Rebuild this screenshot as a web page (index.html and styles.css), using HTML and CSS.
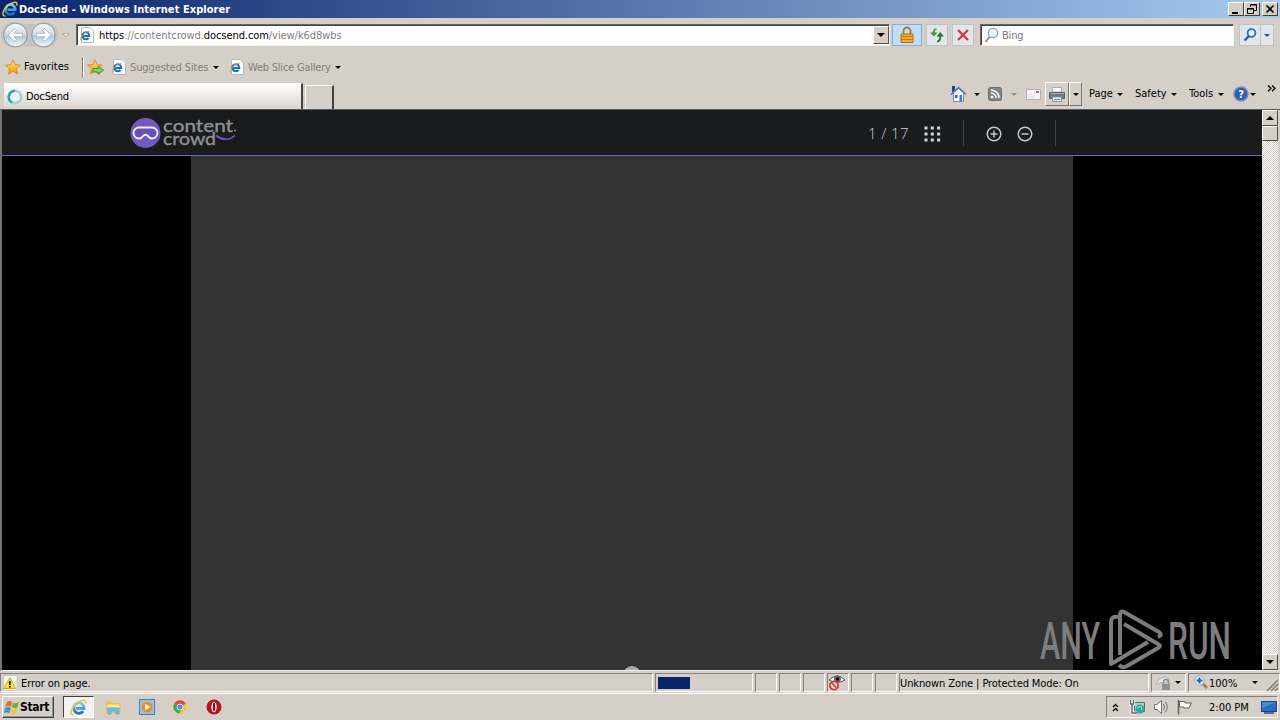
FILE: index.html
```html
<!DOCTYPE html>
<html lang="en">
<head>
  <meta charset="UTF-8">
  <title>DocSend - Windows Internet Explorer</title>
  <link rel="stylesheet" href="styles.css">
</head>
<body>
  <svg class="defs" width="0" height="0">
    <defs>
      <linearGradient id="glass" x1="0" y1="0" x2="0" y2="1">
        <stop offset="0" stop-color="#f8fafb"/><stop offset=".45" stop-color="#d3dce4"/><stop offset=".55" stop-color="#b4c8d8"/><stop offset="1" stop-color="#f0fbff"/>
      </linearGradient>
      <linearGradient id="blue" x1="0" y1="0" x2="0" y2="1">
        <stop offset="0" stop-color="#6fd0f6"/><stop offset="1" stop-color="#1c70c4"/>
      </linearGradient>
      <linearGradient id="gold" x1="0" y1="0" x2="0" y2="1">
        <stop offset="0" stop-color="#ffe36b"/><stop offset="1" stop-color="#f39a17"/>
      </linearGradient>
    </defs>
    <symbol id="ie" viewBox="0 0 16 16">
      <path d="M12.400 11.400A4.900 4.900 0 1 1 13.300 8.800H5.500" fill="none" stroke="url(#blue)" stroke-width="2.600"/>
      <path d="M3.500 15C-1 15.500 .5 9 6 4.500 10.500 .8 16.500 -.5 14.600 4.500" fill="none" stroke="#ecc04a" stroke-width="1.400"/>
    </symbol>
    <symbol id="ie-page" viewBox="0 0 16 16">
      <path d="M2.500 .5H11L14.500 4V15.500H2.500Z" fill="#fff" stroke="#b3bcc4"/>
      <path d="M9.500 11A3.500 3.500 0 1 1 10.300 9H4.500" fill="none" stroke="#1973bd" stroke-width="2"/>
      <path d="M2 13.500C-.5 12 5 4.500 11 4.200" fill="none" stroke="#d6aa31"/>
    </symbol>
    <symbol id="star" viewBox="0 0 16 16">
      <path d="M8 .8 10.200 5.600 15.400 6.200 11.500 9.700 12.600 15 8 12.300 3.400 15 4.500 9.700 .6 6.200 5.800 5.600Z" fill="url(#gold)" stroke="#cf8a1c" stroke-width=".9"/>
    </symbol>
  </svg>

  <div class="title-bar">
    <svg class="title-icon" width="16" height="16"><use href="#ie"/></svg>
    <span class="title-text">DocSend - Windows Internet Explorer</span>
    <div class="window-buttons">
      <svg class="win-btn" width="16" height="14"><path d="M3 10H9" stroke="#000" stroke-width="2"/></svg>
      <svg class="win-btn" width="16" height="14"><path d="M5.500 4V1.500H11.500V7.500H9M5 2H12M2.500 5.500H8.500V10.500H2.500ZM2 6H9" fill="none" stroke="#000"/></svg>
      <svg class="win-btn close" width="16" height="14"><path d="M3.500 2.500 10.500 9.500M10.500 2.500 3.500 9.500" stroke="#000" stroke-width="1.700"/></svg>
    </div>
  </div>

  <div class="nav-bar">
    <svg class="nav-arrows" width="76" height="34">
      <path d="M14 4Q29 8 45 4A13 13 0 0 1 45 30Q29 26 14 30A13 13 0 0 1 14 4" fill="#c3c2c2"/>
      <circle cx="15.500" cy="17" r="11.800" fill="url(#glass)" stroke="#8b959e"/>
      <circle cx="43.500" cy="17" r="11.800" fill="url(#glass)" stroke="#8b959e"/>
      <path d="M8 17 14.500 10.500 16.500 12.500 14 15.300H22.500V18.700H14L16.500 21.500 14.500 23.500Z" fill="#fff" stroke="#8fa5b7" stroke-width=".7"/>
      <path d="M51 17 44.500 10.500 42.500 12.500 45 15.300H36.500V18.700H45L42.500 21.500 44.500 23.500Z" fill="#fff" stroke="#8fa5b7" stroke-width=".7"/>
      <path d="M62.500 15.500H69.500L66 19Z" fill="#e5e2dc" stroke="#b5b0a9"/>
    </svg>
    <div class="field address">
      <svg width="16" height="16"><use href="#ie-page"/></svg>
      <span class="url"><b>https</b>://contentcrowd.<b>docsend.com</b>/view/k6d8wbs</span>
      <div class="combo"><i class="caret big"></i></div>
    </div>
    <div class="tool-btn lock">
      <svg width="16" height="18"><path d="M4.500 8V5A3.500 3.500 0 0 1 11.500 5V8" fill="none" stroke="#a57b28" stroke-width="1.800"/><path d="M2 8H14V16.500H2Z" fill="#f0ae27" stroke="#aa7414"/><path d="M2.500 10.500H13.500M2.500 13.500H13.500" stroke="#b87d16"/></svg>
    </div>
    <div class="tool-btn refresh">
      <svg width="16" height="16"><path d="M7.500 2.500C5 2 4.800 3 4.800 6" fill="none" stroke="#4aa351" stroke-width="2"/><path d="M1 5.500H8.500L4.800 9.500Z" fill="#3d9745"/><path d="M8 14.500C11 14.500 11.300 12 11.300 9" fill="none" stroke="#247c2e" stroke-width="2"/><path d="M7.500 9.500H15L11.300 5Z" fill="#247c2e"/></svg>
    </div>
    <div class="tool-btn stop">
      <svg width="14" height="14"><path d="M2 2 12 12M12 2 2 12" stroke="#cf3541" stroke-width="2.200"/></svg>
    </div>
    <div class="field search">
      <svg width="17" height="17"><circle cx="9" cy="6" r="4.700" fill="#eef5fa" stroke="#8ca0b0" stroke-width="1.300"/><path d="M5.500 10 1.500 15" stroke="#8a8a8a" stroke-width="2"/></svg>
      <span class="search-text">Bing</span>
    </div>
    <div class="tool-btn search-go">
      <svg width="14" height="14"><circle cx="8.500" cy="5" r="3.900" fill="#eaf5ff" stroke="#2f6bd0" stroke-width="1.800"/><path d="M6 8 1.500 12.500" stroke="#2855ae" stroke-width="2.300"/></svg>
    </div>
    <div class="tool-btn search-drop"><i class="caret blue"></i></div>
  </div>

  <div class="favorites-bar">
    <svg class="fav-star" width="16" height="16"><use href="#star"/></svg>
    <span class="fav-text">Favorites</span>
    <i class="divider"></i>
    <svg class="add-star" width="18" height="16" viewBox="0 0 18 16"><use href="#star" width="16" height="16"/><path d="M6 9.500H11V7L16.500 11.200 11 15.200V13H6Z" fill="#7ed35e" stroke="#2b8625" stroke-width=".8"/></svg>
    <svg class="page-icon" width="16" height="16"><use href="#ie-page"/></svg>
    <span class="suggested">Suggested Sites</span><i class="caret"></i>
    <svg class="slice-icon" width="16" height="16"><use href="#ie-page"/></svg>
    <span class="slice">Web Slice Gallery</span><i class="caret"></i>
  </div>

  <div class="tab-row">
    <div class="tab">
      <svg width="16" height="16"><circle cx="8" cy="8" r="6.300" fill="#e6f1f0" stroke="#a3d2d0" stroke-width="2.400"/><path d="M8 1.700A6.300 6.300 0 0 0 5 13.500" fill="none" stroke="#35a39b" stroke-width="2.400"/></svg>
      <span>DocSend</span>
    </div>
    <div class="new-tab"></div>
    <div class="commands">
      <svg class="home" width="18" height="18"><path d="M4.500 8V16.500H14.500V8L9.500 3.500Z" fill="#f7f9fd" stroke="#7189b3"/><path d="M2 9.500 9.500 2.500 17 9.500" fill="none" stroke="#5874ae" stroke-width="1.600"/><path d="M3 1H6V4.500L3 7.500Z" fill="#26418e"/><path d="M6 10H8.500V13H6Z" fill="#375f9b"/><path d="M10.500 10H13V16H10.500Z" fill="#3f7bc2"/></svg>
      <i class="caret home-caret"></i>
      <svg class="rss" width="14" height="14"><rect x=".5" y=".5" width="13" height="13" rx="2" fill="#858585" stroke="#6d6d6d"/><circle cx="4" cy="10" r="1.300" fill="#fff"/><path d="M3 6A5 5 0 0 1 8 11M3 3A8 8 0 0 1 11 11" fill="none" stroke="#fff" stroke-width="1.400"/></svg>
      <i class="caret dim rss-caret"></i>
      <svg class="mail" width="15" height="11"><rect x=".5" y=".5" width="14" height="10" fill="#f6f5f5" stroke="#b4afb4"/><path d="M10 2H13V4H10Z" fill="#d65261"/><path d="M2 8H8M2 6H6" stroke="#ddd"/></svg>
      <div class="print">
        <svg width="18" height="18"><path d="M4.500 2.500H13.500V7H4.500Z" fill="#fff" stroke="#aaa"/><path d="M1.500 7.500H16.500V13.500H1.500Z" fill="#77797c" stroke="#5d6063"/><path d="M2 8.500H16" stroke="#a9adb0"/><path d="M4.500 12H13.500V16.500H4.500Z" fill="#f4f9fb" stroke="#8b9294"/><path d="M6 14.500H12" stroke="#3a91a7"/></svg>
      </div>
      <div class="print-drop"><i class="caret"></i></div>
      <span class="page-menu">Page</span><i class="caret"></i>
      <span class="safety-menu">Safety</span><i class="caret"></i>
      <span class="tools-menu">Tools</span><i class="caret"></i>
      <svg class="help" width="16" height="16"><circle cx="8" cy="8" r="7" fill="#2e5eb9" stroke="#7d93bd" stroke-width="1.500"/><text x="8" y="12" text-anchor="middle" class="help-mark">?</text></svg>
      <i class="caret help-caret"></i>
      <svg class="more" width="9" height="7"><path d="M1 .5 4 3.300 1 6.200M5 .5 8 3.300 5 6.200" fill="none" stroke="#000" stroke-width="1.300"/></svg>
    </div>
  </div>

  <div class="viewport">
    <div class="document">
      <div class="doc-header">
        <svg class="brand" width="110" height="34">
          <circle cx="15.500" cy="17" r="15" fill="#7359bf"/>
          <path d="M9 11.500H22A5.500 5.500 0 0 1 22 22.500Q19.500 22.500 18 20 15.500 17.500 13 20 11.500 22.500 9 22.500A5.500 5.500 0 0 1 9 11.500Z" fill="#6950b5" stroke="#f2edff" stroke-width="1.800"/>
          <text x="33" y="15.500" textLength="70" lengthAdjust="spacingAndGlyphs" class="brand-text">content</text>
          <text x="33" y="28.500" textLength="53" lengthAdjust="spacingAndGlyphs" class="brand-text">crowd</text>
          <path d="M86 19.500Q96 27 105 19.500" fill="none" stroke="#7359bf" stroke-width="1.600"/>
          <circle cx="105" cy="14.500" r="1" fill="#898a8b"/>
        </svg>
        <span class="page-count">1 / 17</span>
        <svg class="grid-icon" width="17" height="16"><path d="M.5 2H17M.5 8H17M.5 14H17" stroke="#d4d5d5" stroke-width="3" stroke-dasharray="3 3.300"/></svg>
        <i class="doc-divider"></i>
        <svg class="zoom-in" width="16" height="16"><circle cx="8" cy="8" r="6.800" fill="none" stroke="#c8c9c9" stroke-width="1.500"/><path d="M4.500 8H11.500M8 4.500V11.500" stroke="#c8c9c9" stroke-width="1.500"/></svg>
        <svg class="zoom-out" width="16" height="16"><circle cx="8" cy="8" r="6.800" fill="none" stroke="#c8c9c9" stroke-width="1.500"/><path d="M4.500 8H11.500" stroke="#c8c9c9" stroke-width="1.500"/></svg>
        <i class="doc-divider"></i>
      </div>
      <div class="stage">
        <div class="slide"><i class="spinner"></i></div>
      </div>
    </div>
    <div class="scrollbar">
      <div class="scroll-btn"><i class="caret big up"></i></div>
      <div class="thumb"></div>
      <div class="scroll-btn down"><i class="caret big"></i></div>
    </div>
    <svg class="watermark" width="200" height="62">
      <g class="mark-text">
        <text x="3" y="50" textLength="60" lengthAdjust="spacingAndGlyphs">ANY</text>
        <text x="131" y="50" textLength="63" lengthAdjust="spacingAndGlyphs">RUN</text>
      </g>
      <g fill="none" stroke="#7d7d7d" stroke-width="4" stroke-linejoin="round">
        <path d="M81 8Q74 7 74 13V55L111 33"/>
        <path d="M83 46V6Q83 1 87 3L122 23Q126 26 121 28"/>
        <path d="M87 15 121 35Q125 37 121 39L90 57Q86 60 82 56"/>
      </g>
    </svg>
  </div>

  <div class="status-bar">
    <div class="cell message">
      <svg width="16" height="16"><path d="M1.500 .5H15V15.500H1.500Z" fill="#f7f7f4" stroke="#c8c6bd"/><path d="M8 2.500 13.500 13.500H1.500Z" fill="#fce22a" stroke="#c9ad20"/><path d="M7.800 6V10M7.800 11V12.500" stroke="#000" stroke-width="1.600"/></svg>
      <span class="error-text">Error on page.</span>
    </div>
    <div class="cell progress"><div class="progress-fill"></div></div>
    <div class="cell small"></div>
    <div class="cell small"></div>
    <div class="cell small"></div>
    <div class="cell small privacy">
      <svg width="19" height="17"><path d="M1 6Q9 -2 17 6Q9 11 1 6Z" fill="#fff" stroke="#555"/><circle cx="9.500" cy="5" r="3.400" fill="#65595c"/><circle cx="9.500" cy="5" r="1.500" fill="#000"/><circle cx="6" cy="11.500" r="4.200" fill="#f2d4d4" stroke="#c83b3b" stroke-width="1.700"/><path d="M3.500 8.500 8.500 14" stroke="#c83b3b" stroke-width="1.600"/></svg>
    </div>
    <div class="cell small"></div>
    <div class="cell small"></div>
    <div class="cell zone"><span class="zone-text">Unknown Zone | Protected Mode: On</span></div>
    <div class="cell lock-status">
      <svg width="18" height="16"><path d="M1 10Q4 2 9 3V1L14 5 9 9V7Q5 7 1 10Z" fill="#e8e8e6" stroke="#b5b3ae"/><path d="M8.500 9V7A2.500 2.500 0 0 1 13.500 7V9" fill="none" stroke="#8c8c8c" stroke-width="1.500"/><path d="M7 9H15V15H7Z" fill="#939393"/></svg>
      <i class="caret"></i>
    </div>
    <div class="cell zoom-level">
      <svg width="15" height="15"><path d="M8 8 13 13" stroke="#a27f4b" stroke-width="2.500"/><circle cx="5.500" cy="5.500" r="4.800" fill="#e6f3fb" stroke="#86a7cb"/><path d="M2.500 5.500H8.500M5.500 2.500V8.500" stroke="#205fb7" stroke-width="2"/></svg>
      <span class="zoom-text">100%</span><i class="caret"></i>
      <svg class="grip" width="13" height="13"><path d="M1 12 12 1M5 12 12 5M9 12 12 9" stroke="#858178" stroke-width="1.600"/></svg>
    </div>
  </div>

  <div class="taskbar">
    <div class="start">
      <svg width="17" height="15"><path d="M4 2Q7 0 9 2L8 7Q5 5 2 7Z" fill="#e9692b"/><path d="M10 3Q13 4 16 2L14 8Q12 9 9 7Z" fill="#74ac3e"/><path d="M2 8Q5 6 8 8L6 13Q4 12 1 13Z" fill="#4592d1"/><path d="M9 9Q12 10 14 9L12 14Q9 15 7 13Z" fill="#f5c52c"/></svg>
      <span class="start-text">Start</span>
    </div>
    <div class="task-active"><svg width="17" height="17"><use href="#ie"/></svg></div>
    <svg class="explorer" width="16" height="16"><path d="M1 2H6L7 4H14V14H1Z" fill="#e8c85e"/><path d="M2 5H15V13H2Z" fill="#fae797" stroke="#d9b64b" stroke-width=".8"/><path d="M3 15V9H14V15H11V12H6V15Z" fill="#74bfe6" stroke="#4a9dc6" stroke-width=".7"/></svg>
    <svg class="player" width="16" height="16"><rect x=".5" y=".5" width="15" height="15" fill="#8fc4ec" stroke="#4580b4"/><circle cx="8" cy="8" r="5.500" fill="#f48a1e"/><path d="M6.200 4.800 11.500 8 6.200 11.200Z" fill="#fff"/></svg>
    <svg class="chrome" width="14" height="14"><circle cx="7" cy="7" r="6.500" fill="#f4c930"/><path d="M7 7 1.300 3.700A6.500 6.500 0 0 1 12.700 3.700Z" fill="#d94b3e"/><path d="M7 7 1.300 3.700A6.500 6.500 0 0 0 6 13.500L9 9Z" fill="#41a457"/><circle cx="7" cy="7" r="3.200" fill="#fff"/><circle cx="7" cy="7" r="2.500" fill="#4b8ee1"/></svg>
    <svg class="opera" width="16" height="16"><circle cx="8" cy="8" r="7.500" fill="#b5141b"/><ellipse cx="8" cy="8" rx="2.700" ry="5.300" fill="#eee"/><ellipse cx="8" cy="8" rx="1.200" ry="4.400" fill="#8f1015"/></svg>
    <div class="tray">
      <svg class="tray-more" width="7" height="9"><path d="M1 4 3.500 1.500 6 4M1 8 3.500 5.500 6 8" fill="none" stroke="#000" stroke-width="1.300"/></svg>
      <svg class="network" width="17" height="16"><path d="M5.500 3.500H15.500V12.500H5.500Z" fill="#a9d6d2" stroke="#576969"/><circle cx="11" cy="10" r="4.500" fill="#31a49b"/><path d="M8 9 12 7 13 11" fill="none" stroke="#b6e6dc"/><path d="M1.500 1V5H4.500V1M3 5V14H8" fill="none" stroke="#fff" stroke-width="3"/><path d="M1.500 1V5H4.500V1M3 5V14H8" fill="none" stroke="#586464" stroke-width="1.400"/></svg>
      <svg class="speaker" width="17" height="16"><path d="M1.500 5.500H4L8.500 1.500V14.500L4 10.500H1.500Z" fill="#fff" stroke="#77746f"/><path d="M10.500 5Q12.500 8 10.500 11M12.500 3Q16 8 12.500 13" fill="none" stroke="#77746f"/></svg>
      <svg class="flag" width="17" height="16"><path d="M1.500 1V15.500" stroke="#66635f" stroke-width="1.500"/><path d="M2.500 2.500H8V4H14.500L12 9H7V8H2.500Z" fill="#fff" stroke="#66635f"/></svg>
      <span class="clock">2:00 PM</span>
      <svg class="desktop" width="16" height="13"><rect x=".5" y=".5" width="15" height="10" fill="#276fc6" stroke="#1e447c"/><path d="M1 1H15L1 7Z" fill="#4a8bd6"/><path d="M3 12H13" stroke="#576d87" stroke-width="2"/></svg>
    </div>
  </div>
</body>
</html>
```
FILE: styles.css
```css
* {
  box-sizing: border-box;
}
body {
  margin: 0;
  width: 1280px;
  height: 720px;
  overflow: hidden;
  display: flex;
  flex-direction: column;
  background: #d5cfc8;
  color: #000;
  font-family: "DejaVu Sans Condensed", "DejaVu Sans", sans-serif;
  font-stretch: condensed;
  font-size: 11px;
  line-height: 14px;
}
svg {
  display: block;
  flex: none;
}
span {
  flex: none;
  white-space: nowrap;
}
.defs {
  position: absolute;
}
.caret {
  flex: none;
  width: 0;
  height: 0;
  border: 3px solid transparent;
  border-top-color: #000;
  border-bottom: 0;
}
.caret.big {
  border-width: 4px 4px 0;
}
.caret.up {
  transform: rotate(180deg);
}
.caret.blue {
  border-top-color: #244f9b;
}
.caret.dim {
  border-top-color: #96918a;
}

/* title bar */
.title-bar {
  flex: none;
  height: 18px;
  display: flex;
  align-items: center;
  padding: 0 2px;
  background: linear-gradient(to right, #0a246a, #a6caf0);
}
.title-text {
  width: 212px;
  margin-left: 1px;
  padding-top: 1px;
  color: #fff;
  font-weight: bold;
  letter-spacing: .05px;
}
.window-buttons {
  display: flex;
  margin-left: auto;
}
.win-btn {
  background: #d5cfc8;
  border: 1px solid;
  border-color: #fff #404040 #404040 #fff;
}
.win-btn.close {
  margin-left: 2px;
}

/* address and search */
.nav-bar {
  flex: none;
  height: 34px;
  display: flex;
  align-items: center;
}
.field {
  height: 22px;
  display: flex;
  align-items: center;
  background: #fff;
  border: 1px solid;
  border-color: #6b6862 #f4f2ef #f4f2ef #6b6862;
  box-shadow: inset 1px 1px #404040;
}
.address {
  width: 814px;
  padding-left: 2px;
}
.url {
  margin-left: 4px;
  padding-top: 2px;
  color: #808080;
  letter-spacing: -.07px;
}
.url b {
  color: #000;
  font-weight: normal;
}
.combo {
  width: 16px;
  height: 18px;
  margin-left: auto;
  display: flex;
  align-items: center;
  justify-content: center;
  background: #d5cfc8;
  border: 1px solid;
  border-color: #fff #55524d #55524d #fff;
}
.tool-btn {
  flex: none;
  width: 22px;
  height: 22px;
  display: flex;
  align-items: center;
  justify-content: center;
  background: #e4e5e7;
  border: 1px solid #bbc3ce;
}
.lock {
  width: 30px;
  margin-left: 2px;
  background: #c3dcfa;
  border-color: #7fadeb;
}
.refresh,
.stop {
  margin-left: 4px;
}
.search {
  width: 254px;
  margin-left: 6px;
  padding-left: 3px;
}
.search-text {
  margin-left: 1px;
  padding-top: 2px;
  color: #777;
  letter-spacing: -.2px;
}
.search-go {
  margin-left: 5px;
}
.search-drop {
  width: 13px;
  border-left: 0;
}

/* favorites */
.favorites-bar {
  flex: none;
  height: 30px;
  display: flex;
  align-items: center;
  padding-left: 5px;
  color: #858078;
}
.fav-text {
  width: 47px;
  margin-left: 3px;
  color: #000;
  letter-spacing: .05px;
}
.divider {
  width: 2px;
  height: 20px;
  margin-left: 11px;
  border-left: 1px solid #817d76;
  border-right: 1px solid #fff;
}
.add-star {
  margin-left: 3px;
}
.page-icon {
  margin-left: 6px;
}
.suggested {
  width: 79px;
  margin: 0 4px 0 3px;
  padding-top: 1px;
  letter-spacing: -.1px;
}
.slice-icon {
  margin-left: 10px;
}
.slice {
  width: 84px;
  margin: 0 3px;
  padding-top: 1px;
  letter-spacing: -.22px;
}

/* tabs */
.tab-row {
  flex: none;
  height: 27px;
  display: flex;
  align-items: flex-end;
}
.tab {
  width: 299px;
  height: 26px;
  margin-left: 4px;
  padding-left: 4px;
  display: flex;
  align-items: center;
  gap: 3px;
  background: linear-gradient(#fff, #d9d5cf);
  border-top: 1px solid #fff;
  border-right: 2px solid #46443f;
}
.tab span {
  letter-spacing: -.15px;
}
.tab svg {
  margin-left: -1px;
}
.new-tab {
  width: 29px;
  height: 24px;
  margin-left: 2px;
  border: 1px solid #fff;
  border-right: 2px solid #46443f;
  border-bottom: 0;
}
.commands {
  height: 27px;
  margin-left: auto;
  display: flex;
  align-items: center;
  padding-bottom: 3px;
}
.home-caret {
  margin-left: 7px;
}
.rss {
  margin-left: 8px;
}
.rss-caret {
  margin-left: 9px;
}
.mail {
  margin-left: 9px;
}
.print,
.print-drop {
  height: 24px;
  display: flex;
  align-items: center;
  justify-content: center;
  border: 1px solid;
  border-color: #fff #77736c #77736c #fff;
}
.print {
  width: 24px;
  margin-left: 4px;
}
.print-drop {
  width: 13px;
}
.page-menu {
  width: 25px;
  margin: 0 3px 0 7px;
}
.safety-menu {
  width: 33px;
  margin: 0 3px 0 12px;
}
.tools-menu {
  width: 26px;
  margin: 0 3px 0 12px;
}
.help {
  margin-left: 9px;
}
.help-mark {
  fill: #fff;
  font-size: 11px;
  font-weight: bold;
}
.help-caret {
  margin-left: 1px;
}
.more {
  margin: -12px 4px 0 11px;
}

/* page */
.viewport {
  position: relative;
  flex: none;
  height: 562px;
  display: flex;
  border-top: 1px solid #5c5a56;
  border-left: 2px solid #77746f;
  border-bottom: 1px solid #f4f2ef;
}
.document {
  width: 1260px;
  display: flex;
  flex-direction: column;
  background: #000;
}
.doc-header {
  flex: none;
  height: 46px;
  display: flex;
  align-items: center;
  padding-left: 128px;
  background: #191b1d;
  border-bottom: 1px solid #7065b5;
}
.brand {
  overflow: visible;
}
.brand-text {
  fill: #8e8f90;
  stroke: #8e8f90;
  stroke-width: .4px;
  font-family: Lato, sans-serif;
  font-size: 18px;
}
.page-count {
  width: 42px;
  margin: 1px 14px 0 628px;
  color: #cfd0d0;
  font-family: "Open Sans", sans-serif;
  font-stretch: normal;
  font-weight: 300;
  font-size: 15px;
  letter-spacing: .4px;
}
.grid-icon,
.zoom-in,
.zoom-out {
  margin-top: 3px;
}
.doc-divider {
  width: 1px;
  height: 26px;
  margin: 0 22px;
  background: #414345;
}
.zoom-out {
  margin-left: 15px;
}
.stage {
  flex: 1;
  display: flex;
  padding-left: 189px;
}
.slide {
  width: 882px;
  display: flex;
  align-items: flex-end;
  justify-content: center;
  overflow: hidden;
  background: #333;
}
.spinner {
  width: 18px;
  height: 18px;
  margin-bottom: -14px;
  border-radius: 50%;
  background: #aaa;
}
.scrollbar {
  width: 16px;
  display: flex;
  flex-direction: column;
  background: repeating-conic-gradient(#fff 0 25%, #d5cfc8 0 50%) 0 0 / 2px 2px;
}
.scroll-btn,
.thumb {
  height: 16px;
  display: flex;
  align-items: center;
  justify-content: center;
  background: #d5cfc8;
  border: 1px solid;
  border-color: #fff #504d48 #504d48 #fff;
}
.thumb {
  height: 15px;
}
.scroll-btn.down {
  margin-top: auto;
}
.watermark {
  position: absolute;
  left: 1035px;
  top: 499px;
}
.mark-text {
  fill: #7d7d7d;
  font-family: Roboto, sans-serif;
  font-stretch: normal;
  font-weight: 500;
  font-size: 52px;
}

/* status bar */
.status-bar {
  flex: none;
  height: 23px;
  display: flex;
  padding: 2px 0;
  border-bottom: 1px solid #fff;
}
.cell {
  flex: none;
  height: 19px;
  display: flex;
  align-items: center;
  border: 1px solid;
  border-color: #85817a #fff #fff #85817a;
}
.cell span {
  padding-top: 2px;
}
.message {
  width: 653px;
  padding-left: 1px;
}
.error-text {
  margin-left: 3px;
  letter-spacing: -.07px;
}
.progress {
  width: 98px;
  margin: 0 2px;
  padding-left: 2px;
}
.progress-fill {
  width: 32px;
  height: 12px;
  background: #0a246a;
}
.small {
  width: 22px;
  margin-right: 2px;
}
.zone {
  width: 250px;
}
.zone-text {
  letter-spacing: -.1px;
}
.lock-status {
  width: 35px;
  margin: 0 2px;
  padding-left: 3px;
}
.lock-status .caret {
  margin-left: 2px;
}
.zoom-level {
  width: 92px;
  padding-left: 5px;
}
.zoom-text {
  width: 28px;
  margin: 0 15px 0 0;
}
.grip {
  margin: 5px 0 0 8px;
}

/* taskbar */
.taskbar {
  flex: 1;
  display: flex;
  align-items: center;
  padding-left: 2px;
}
.start {
  width: 52px;
  height: 22px;
  display: flex;
  align-items: center;
  background: #d5cfc8;
  border: 1px solid;
  border-color: #fff #404040 #404040 #fff;
  box-shadow: inset -1px -1px #99958e;
}
.start-text {
  font-weight: bold;
  font-size: 12px;
  letter-spacing: -.3px;
}
.task-active {
  width: 31px;
  height: 22px;
  margin-left: 9px;
  display: flex;
  align-items: center;
  justify-content: center;
  background: #f5f3ef;
  border: 1px solid;
  border-color: #404040 #fff #fff #404040;
}
.explorer {
  margin-left: 11px;
}
.player {
  margin-left: 18px;
}
.chrome {
  margin-left: 18px;
}
.opera {
  margin-left: 19px;
}
.tray {
  width: 172px;
  height: 22px;
  margin: 0 2px 0 auto;
  display: flex;
  align-items: center;
  padding-left: 5px;
  border: 1px solid;
  border-color: #85817a #fff #fff #85817a;
}
.network {
  margin-left: 10px;
}
.speaker {
  margin-left: 7px;
}
.flag {
  margin-left: 7px;
}
.clock {
  width: 40px;
  margin: 0 12px 0 15px;
  padding-top: 2px;
}
```
